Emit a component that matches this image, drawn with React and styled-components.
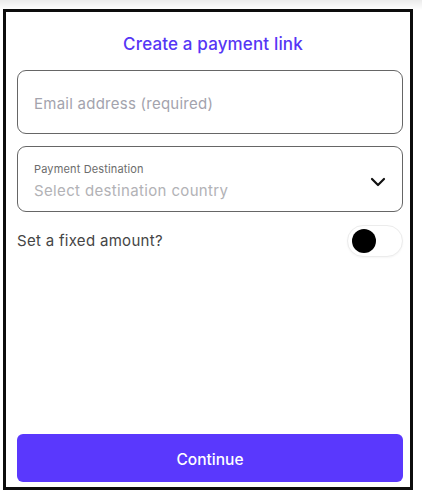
import React, { useState } from 'react';
import styled, { createGlobalStyle } from 'styled-components';

const GlobalStyle = createGlobalStyle`
    * { box-sizing: border-box; }
    body {
        margin: 0;
        background: linear-gradient(#ebebeb 0, #ffffff 10px) no-repeat;
        font-family: Inter, "Noto Sans", sans-serif;
    }
`;

const Page = styled.div`
    padding: 9px 9px 0 3px;
`;

const Card = styled.form`
    width: 410px;
    height: 481px;
    border: 3px solid #0d0d0d;
    background: #fff;
    display: flex;
    flex-direction: column;
    padding: 20px 7px 5px 11px;
`;

const Title = styled.h1`
    margin: 0 0 14px;
    padding-left: 6px;
    font: 500 17px/24px Inter, sans-serif;
    color: #5636f5;
    text-align: center;
    letter-spacing: 0.15px;
`;

const Field = styled.div`
    position: relative;
    height: ${p => p.$h}px;
    border: 1px solid #666;
    border-radius: 9px;
    display: flex;
    flex-direction: column;
    justify-content: ${p => (p.$top ? 'flex-start' : 'center')};
    padding: ${p => (p.$top ? '15px 16px 0' : '3px 16px 0')};
    margin-bottom: 12px;
`;

const Input = styled.input`
    border: none;
    outline: none;
    padding: 0;
    background: transparent;
    font: 400 15px/20px Inter, sans-serif;
    letter-spacing: 0.25px;
    color: #333;
    &::placeholder { color: #a3a3ad; }
`;

const Label = styled.span`
    font: 400 11px/14px Inter, sans-serif;
    letter-spacing: 0.15px;
    color: #6c6c6c;
`;

const Placeholder = styled.span`
    font: 400 15px/22px Inter, sans-serif;
    letter-spacing: 0.35px;
    color: #b2b2b6;
    margin-top: 4px;
`;

const Chevron = styled.svg`
    position: absolute;
    right: 16px;
    top: calc(50% + 3px);
    transform: translateY(-50%);
`;

const Row = styled.div`
    display: flex;
    align-items: center;
    justify-content: space-between;
    height: 32px;
    margin-top: 1px;
`;

const RowText = styled.span`
    font: 400 15px/20px Inter, sans-serif;
    letter-spacing: 0.3px;
    color: #454545;
`;

const Toggle = styled.button`
    width: 56px;
    height: 32px;
    border-radius: 16px;
    border: 1px solid #ececec;
    background: #fff;
    padding: 0 0 0 4px;
    display: flex;
    align-items: center;
    justify-content: ${p => (p.$on ? 'flex-end' : 'flex-start')};
    cursor: pointer;
    box-shadow: 0 1px 2px rgba(0, 0, 0, 0.04);
`;

const Knob = styled.span`
    width: 24px;
    height: 24px;
    border-radius: 50%;
    background: #000;
`;

const Button = styled.button`
    margin-top: auto;
    height: 48px;
    border: none;
    border-radius: 6px;
    background: #5a38fd;
    color: #fff;
    padding: 3px 0 0;
    font: 500 15.5px/20px Inter, sans-serif;
    cursor: pointer;
`;

export default function App() {
    const [fixed, setFixed] = useState(false);
    return (
        <Page>
            <GlobalStyle />
            <Card onSubmit={e => e.preventDefault()}>
                <Title>Create a payment link</Title>
                <Field $h={64}>
                    <Input placeholder="Email address (required)" />
                </Field>
                <Field $h={66} $top>
                    <Label>Payment Destination</Label>
                    <Placeholder>Select destination country</Placeholder>
                    <Chevron width="16" height="10" viewBox="0 0 16 10" fill="none">
                        <path d="M2 2l6 6 6-6" stroke="#111" strokeWidth="2.2" strokeLinecap="round" strokeLinejoin="round" />
                    </Chevron>
                </Field>
                <Row>
                    <RowText>Set a fixed amount?</RowText>
                    <Toggle type="button" $on={fixed} onClick={() => setFixed(!fixed)}>
                        <Knob />
                    </Toggle>
                </Row>
                <Button type="submit">Continue</Button>
            </Card>
        </Page>
    );
}
